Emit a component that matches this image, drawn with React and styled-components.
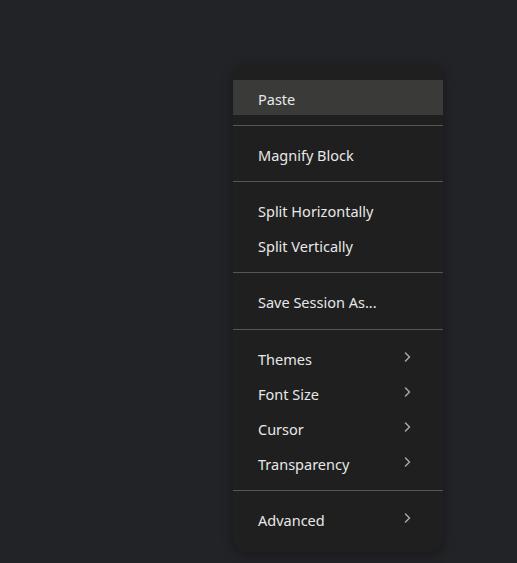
import React from "react";
import styled, { createGlobalStyle } from "styled-components";

const GlobalStyle = createGlobalStyle`
  html, body {
    margin: 0;
    height: 100%;
    background: #222327;
  }
  #root {
    position: relative;
    height: 100vh;
  }
`;

const Menu = styled.div`
  position: absolute;
  left: 233px;
  top: 65px;
  width: 210px;
  box-sizing: border-box;
  padding: 15px 0 16px;
  background: #1f1f1f;
  border-radius: 13px;
  box-shadow: 0 2px 12px rgba(0, 0, 0, 0.35);
  font-family: "Noto Sans", "Open Sans", sans-serif;
  font-size: 14.5px;
  color: #e8e8e8;
  overflow: hidden;
`;

const Item = styled.div`
  display: flex;
  align-items: center;
  justify-content: space-between;
  height: 35px;
  padding: 0 32px 0 25px;
  background: ${(p) => (p.active ? "#3a3a38" : "transparent")};
  cursor: default;
`;

const Label = styled.span`
  line-height: 1;
  padding-top: 3px;
`;

const Divider = styled.div`
  height: 1px;
  margin: 10px 0 10.2px;
  background: #565656;
`;

const Chevron = () => (
  <svg width="7" height="10" viewBox="0 0 7 10" fill="none">
    <polyline
      points="1.5,1 5.5,5 1.5,9"
      stroke="#a8a8a8"
      strokeWidth="1.5"
      strokeLinecap="round"
      strokeLinejoin="round"
    />
  </svg>
);

const groups = [
  [{ label: "Paste", active: true }],
  [{ label: "Magnify Block" }],
  [{ label: "Split Horizontally" }, { label: "Split Vertically" }],
  [{ label: "Save Session As..." }],
  [
    { label: "Themes", sub: true },
    { label: "Font Size", sub: true },
    { label: "Cursor", sub: true },
    { label: "Transparency", sub: true },
  ],
  [{ label: "Advanced", sub: true }],
];

export default function App() {
  return (
    <>
      <GlobalStyle />
      <Menu>
        {groups.map((group, gi) => (
          <React.Fragment key={gi}>
            {gi > 0 && <Divider />}
            {group.map((item) => (
              <Item key={item.label} active={item.active}>
                <Label>{item.label}</Label>
                {item.sub && <Chevron />}
              </Item>
            ))}
          </React.Fragment>
        ))}
      </Menu>
    </>
  );
}
